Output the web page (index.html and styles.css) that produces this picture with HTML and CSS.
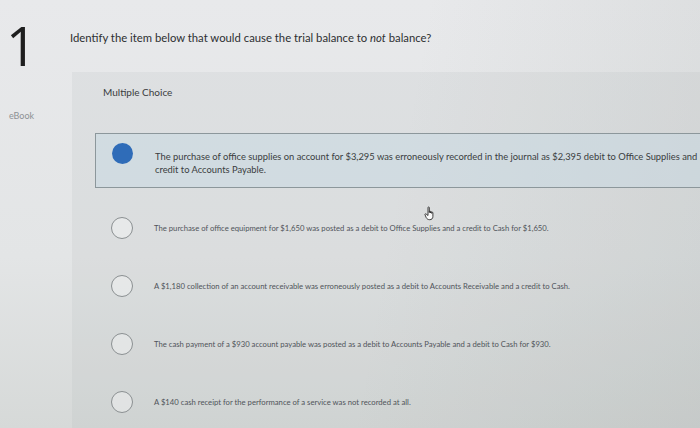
FILE: index.html
```html
<!DOCTYPE html>
<html>
<head>
<meta charset="utf-8">
<link rel="stylesheet" href="styles.css">
</head>
<body>
<div class="page">
  <aside class="sidebar">
    <div class="qnum">1</div>
    <div class="ebook">eBook</div>
  </aside>
  <main class="main">
    <p class="question">Identify the item below that would cause the trial balance to <em>not</em> balance?</p>
    <section class="mc">
      <div class="mc-label">Multiple Choice</div>
      <ul class="options">
        <li class="option selected">
          <span class="radio"></span>
          <span class="opt-text">The purchase of office supplies on account for $3,295 was erroneously recorded in the journal as $2,395 debit to Office Supplies and $2,395 credit to Accounts Payable.</span>
        </li>
        <li class="option">
          <span class="radio"></span>
          <span class="opt-text">The purchase of office equipment for $1,650 was posted as a debit to Office Supplies and a credit to Cash for $1,650.</span>
        </li>
        <li class="option">
          <span class="radio"></span>
          <span class="opt-text">A $1,180 collection of an account receivable was erroneously posted as a debit to Accounts Receivable and a credit to Cash.</span>
        </li>
        <li class="option">
          <span class="radio"></span>
          <span class="opt-text">The cash payment of a $930 account payable was posted as a debit to Accounts Payable and a debit to Cash for $930.</span>
        </li>
        <li class="option">
          <span class="radio"></span>
          <span class="opt-text">A $140 cash receipt for the performance of a service was not recorded at all.</span>
        </li>
      </ul>
    </section>
  </main>
  <svg class="cursor" width="12" height="15" viewBox="0 0 12 15">
    <path d="M4 9.5V1.6c0-.9 1.3-.9 1.3 0V6.6V5.6c0-.8 1.2-.8 1.2 0V7V6.2c0-.8 1.2-.8 1.2 0V7.4V6.8c0-.8 1.2-.8 1.2 0V10.4c0 2.2-1.3 3.3-3.2 3.3-1.8 0-2.8-.9-3.5-2.1L1 8.7c-.3-.7.5-1.2 1.1-.7z" fill="#fafafa" stroke="#2a2a2a" stroke-width="0.9" stroke-linejoin="round"/>
  </svg>
</div>
</body>
</html>
```
FILE: styles.css
```css
html, body {
  margin: 0;
  padding: 0;
  width: 700px;
  height: 428px;
  overflow: hidden;
}
body {
  font-family: Lato, "Open Sans", "Liberation Sans", sans-serif;
  background:
    linear-gradient(100deg, rgba(255,255,255,0) 55%, rgba(120,130,125,0.12) 100%),
    linear-gradient(180deg, #e8e9eb 0%, #e3e5e6 60%, #d6d9d8 100%);
  color: #333;
}
.page {
  position: relative;
  display: flex;
  height: 428px;
}
.cursor {
  position: absolute;
  left: 424px;
  top: 206px;
}
.sidebar {
  width: 62px;
  flex: none;
  padding-left: 6px;
  box-sizing: border-box;
}
.qnum {
  font-family: "Open Sans", Lato, sans-serif;
  font-weight: 400;
  font-size: 54px;
  line-height: 54px;
  color: #1e1e1e;
  margin-top: 18px;
}
.ebook {
  font-size: 9px;
  color: #8d9194;
  margin-top: 38px;
  margin-left: 3px;
}
.main {
  flex: 1;
  display: flex;
  flex-direction: column;
  min-width: 0;
}
.question {
  margin: 30px 0 0 8px;
  font-size: 11.3px;
  line-height: 15px;
  color: #2d2f31;
}
.question em {
  font-style: italic;
}
.mc {
  flex: 1;
  margin: 27px 0 0 10px;
  background: rgba(170, 178, 180, 0.14);
  padding-top: 14px;
}
.mc-label {
  font-size: 10px;
  line-height: 12px;
  color: #3a3c3e;
  padding-left: 31px;
}
.options {
  list-style: none;
  margin: 35px 0 0 23px;
  padding: 0;
}
.option {
  display: flex;
  align-items: center;
  height: 58px;
  padding-left: 16px;
  box-sizing: border-box;
}
.option.selected {
  height: 55px;
  align-items: flex-start;
  border: 1px solid #8c979b;
  border-right: none;
  background: rgba(200, 216, 226, 0.55);
  padding-top: 9px;
  margin-bottom: 11px;
}
.radio {
  flex: none;
  width: 20px;
  height: 20px;
  border-radius: 50%;
  border: 1.5px solid #8b9092;
  background: rgba(255,255,255,0.35);
}
.selected .radio {
  border: none;
  width: 21px;
  height: 21px;
  background: #2f6cb8;
}
.opt-text {
  margin-left: 21px;
  font-size: 7.7px;
  line-height: 12px;
  color: #50545a;
  white-space: nowrap;
}
.selected .opt-text {
  flex: none;
  margin-left: 22px;
  margin-top: 7px;
  font-size: 9.35px;
  line-height: 13px;
  white-space: normal;
  width: 595px;
  color: #3a3d40;
}
```
